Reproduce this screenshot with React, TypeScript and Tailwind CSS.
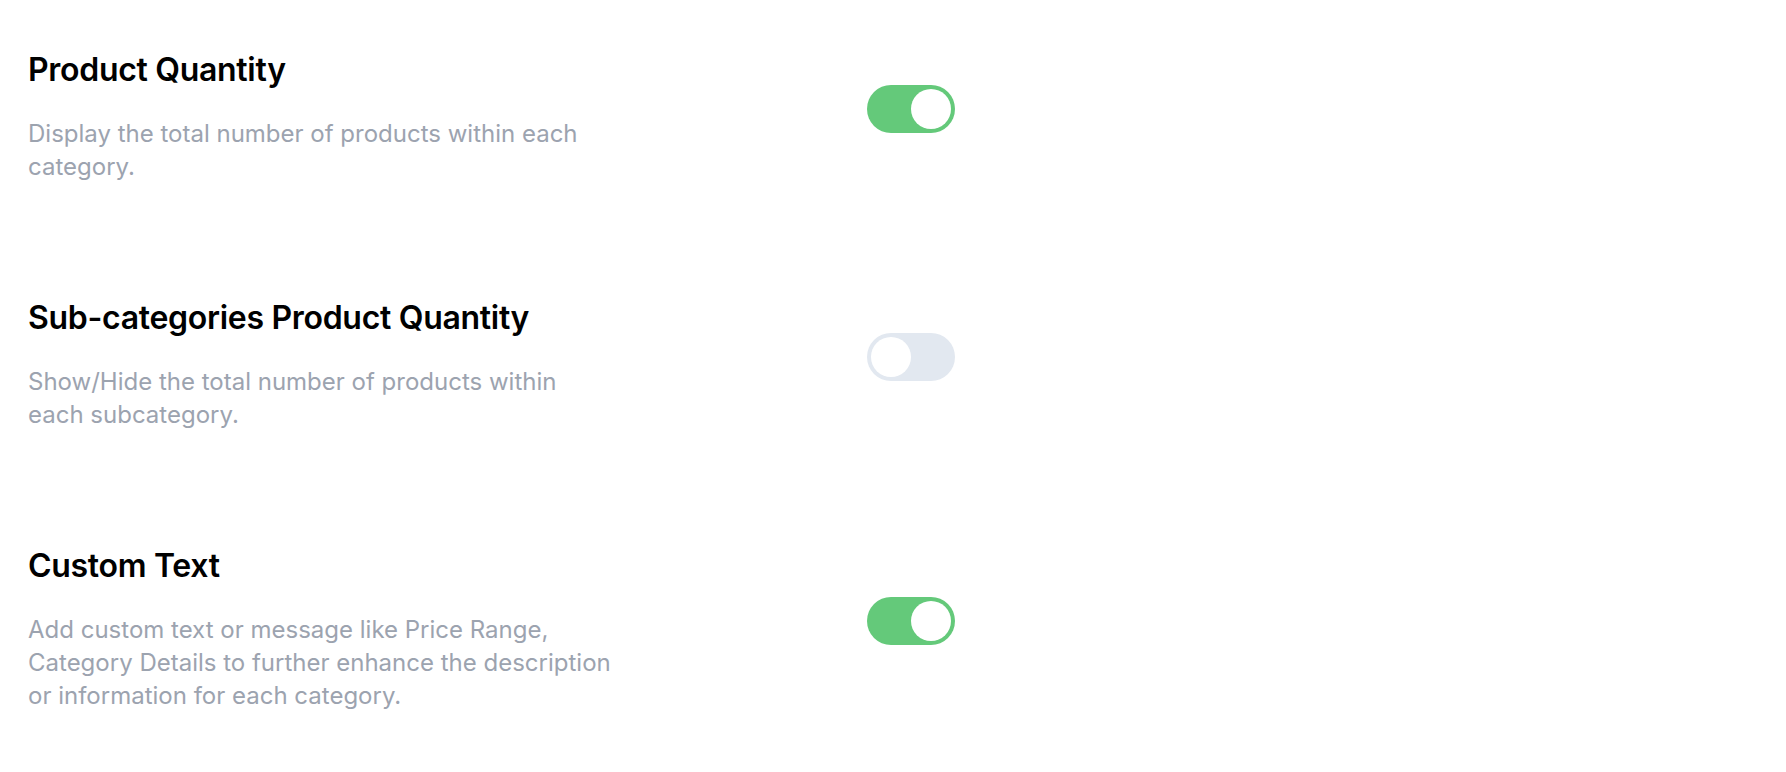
import React, { useState } from 'react';

type Row = { title: string; lines: string[]; on: boolean };

const rows: Row[] = [
  {
    title: 'Product Quantity',
    lines: ['Display the total number of products within each', 'category.'],
    on: true,
  },
  {
    title: 'Sub-categories Product Quantity',
    lines: ['Show/Hide the total number of products within', 'each subcategory.'],
    on: false,
  },
  {
    title: 'Custom Text',
    lines: [
      'Add custom text or message like Price Range,',
      'Category Details to further enhance the description',
      'or information for each category.',
    ],
    on: true,
  },
];

function Toggle({ on, onClick }: { on: boolean; onClick: () => void }) {
  return (
    <button
      onClick={onClick}
      className={
        'mb-[16px] flex h-[48px] w-[88px] items-center rounded-full p-[4px] ' +
        (on ? 'justify-end bg-[#64c97a]' : 'justify-start bg-[#e2e8f0]')
      }
    >
      <span className="block h-[40px] w-[40px] rounded-full bg-white" />
    </button>
  );
}

export default function App() {
  const [state, setState] = useState(rows.map((r) => r.on));

  return (
    <div className="min-h-[772px] bg-white pl-[28px] pt-[50px] font-['Inter',sans-serif]">
      <div className="flex flex-col gap-[115px]">
        {rows.map((r, i) => (
          <div key={r.title} className="grid grid-cols-[839px_88px] items-center">
            <div>
              <h2 className="text-[32px] font-semibold leading-[40px] tracking-[-0.3px] text-black">{r.title}</h2>
              <p className="mt-[27px] text-[24px] leading-[33px] text-[#9ca3af]">
                {r.lines.map((l, j) => (
                  <span key={j} className="block whitespace-nowrap">
                    {l}
                  </span>
                ))}
              </p>
            </div>
            <Toggle on={state[i]} onClick={() => setState((s) => s.map((v, k) => (k === i ? !v : v)))} />
          </div>
        ))}
      </div>
    </div>
  );
}
